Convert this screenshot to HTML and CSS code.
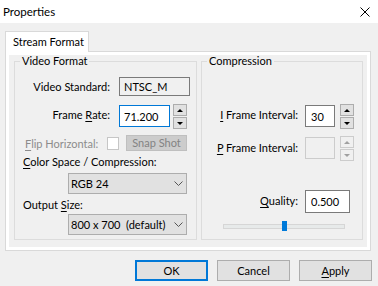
FILE: index.html
```html
<!DOCTYPE html>
<html lang="en">
<head>
    <meta charset="UTF-8">
    <title>Properties</title>
    <link rel="stylesheet" href="styles.css">
</head>
<body>

<div class="titlebar">
    <span>Properties</span>
    <svg class="close" width="10" height="10" viewBox="0 0 10 10">
        <path d="M0.5 0.5 L9.5 9.5 M9.5 0.5 L0.5 9.5" stroke="#000" stroke-width="1" fill="none"/>
    </svg>
</div>

<div class="tabs">
    <div class="tab">Stream Format</div>
</div>

<div class="panel">
    <div class="page">

        <!-- Video Format -->
        <fieldset class="group group-video">
            <legend>Video Format</legend>

            <div class="row row-std">
                <label class="lbl-right">Video Standard:</label>
                <input class="edit readonly w-std" type="text" value="NTSC_M" readonly>
            </div>

            <div class="row row-rate">
                <label class="lbl-right">Frame <u>R</u>ate:</label>
                <input class="edit focused w-rate" type="text" value="71.200">
                <div class="spin">
                    <div class="spin-btn"><span class="arrow-up"></span></div>
                    <div class="spin-btn"><span class="arrow-down"></span></div>
                </div>
            </div>

            <div class="row row-flip">
                <label class="lbl-flip"><u>F</u>lip Horizontal:</label>
                <span class="check"></span>
                <button class="btn-snap" disabled>Snap Shot</button>
            </div>

            <div class="caption"><u>C</u>olor Space / Compression:</div>
            <div class="row row-combo">
                <div class="combo"><span>RGB 24</span><svg class="chev" width="9" height="5" viewBox="0 0 9 5"><path d="M0.5 0.5 L4.5 4.5 L8.5 0.5" stroke="#555" fill="none"/></svg></div>
            </div>

            <div class="caption">Output <u>S</u>ize:</div>
            <div class="row row-combo2">
                <div class="combo"><span>800 x 700  (default)</span><svg class="chev" width="9" height="5" viewBox="0 0 9 5"><path d="M0.5 0.5 L4.5 4.5 L8.5 0.5" stroke="#555" fill="none"/></svg></div>
            </div>
        </fieldset>

        <!-- Compression -->
        <fieldset class="group group-comp">
            <legend>Compression</legend>

            <div class="row row-iframe">
                <label class="lbl-comp lbl-top"><u>I</u> Frame Interval:</label>
                <input class="edit w-int" type="text" value="30">
                <div class="spin spin-comp">
                    <div class="spin-btn"><span class="arrow-up"></span></div>
                    <div class="spin-btn"><span class="arrow-down"></span></div>
                </div>
            </div>

            <div class="row row-pframe">
                <label class="lbl-comp lbl-top"><u>P</u> Frame Interval:</label>
                <input class="edit disabled w-int" type="text" value="" disabled>
                <div class="spin spin-comp">
                    <div class="spin-btn off"><span class="arrow-up"></span></div>
                    <div class="spin-btn off"><span class="arrow-down"></span></div>
                </div>
            </div>

            <div class="row row-quality">
                <label class="lbl-comp"><u>Q</u>uality:</label>
                <input class="edit w-qual" type="text" value="0.500">
            </div>

            <div class="slider">
                <span class="thumb" style="left: 58px"></span>
            </div>
        </fieldset>

    </div>
</div>

<div class="buttons">
    <button class="btn default">OK</button>
    <button class="btn">Cancel</button>
    <button class="btn"><u>A</u>pply</button>
</div>

</body>
</html>
```

FILE: styles.css
```css
body {
    margin: 0;
    width: 378px;
    height: 286px;
    overflow: hidden;
    background-color: #f0f0f0;
    font-family: Lato, "Liberation Sans", sans-serif;
    font-size: 11px;
    color: #000;
}

u {
    text-decoration-thickness: 1px;
    text-underline-offset: 2px;
}

/* Titelleiste */
.titlebar {
    height: 23px;
    background-color: #fff;
    display: flex;
    align-items: center;
    justify-content: space-between;
    padding: 0 8px 0 3px;
    font-size: 11.5px;
}

.close {
    display: block;
}

/* Reiter */
.tabs {
    display: flex;
    padding: 8px 0 0 5px;
}

.tab {
    box-sizing: border-box;
    width: 84px;
    height: 21px;
    border: 1px solid #d9d9d9;
    border-bottom: none;
    background-color: #fff;
    padding-left: 7px;
    line-height: 20px;
    white-space: nowrap;
    margin-bottom: -1px;
    position: relative;
    z-index: 1;
}

.panel {
    box-sizing: border-box;
    height: 200px;
    margin: 0 7px 0 5px;
    border: 1px solid #d9d9d9;
    background-color: #fff;
    padding: 3px;
}

.page {
    box-sizing: border-box;
    height: 100%;
    background-color: #f0f0f0;
    display: flex;
    gap: 4px;
    padding: 0 4px 0 5px;
}

/* Gruppenrahmen */
.group {
    box-sizing: border-box;
    margin: 0;
    padding: 0;
    height: 185px;
    border: 1px solid #dcdcdc;
    min-width: 0;
}

.group-video {
    width: 183px;
}

.group-comp {
    width: 162px;
}

.group legend {
    margin-left: 5px;
    padding: 0 2px;
    line-height: 12px;
    white-space: nowrap;
}

.row {
    display: flex;
    align-items: flex-start;
}

/* Eingabefelder */
.edit {
    box-sizing: border-box;
    height: 22px;
    margin: 0;
    border: 1px solid #7a7a7a;
    background-color: #fff;
    padding: 0 0 0 4px;
    font: inherit;
    color: #000;
    outline: none;
}

.edit.readonly {
    background-color: #f0f0f0;
    height: 19px;
}

.edit.focused {
    border-color: #0078d7;
}

.edit.disabled {
    background-color: #f0f0f0;
    border-color: #cccccc;
}

.w-std { width: 71px; }
.w-rate { width: 51px; margin-top: 1px; }
.w-int { width: 30px; padding-left: 5px; margin-top: 1px; }
.w-qual { width: 45px; padding-left: 5px; height: 23px; }

.lbl-right {
    width: 95px;
    text-align: right;
    margin-right: 9px;
    align-self: center;
}

.row-std { margin-top: 10px; height: 19px; }
.row-rate { margin-top: 8px; height: 26px; }

.row-rate .lbl-right {
    align-self: flex-start;
    line-height: 15px;
    margin-top: 3px;
}

/* Drehfeld */
.spin {
    display: flex;
    flex-direction: column;
    gap: 1px;
    margin-left: 3px;
}

.spin-comp {
    margin-left: 5px;
}

.spin-btn {
    box-sizing: border-box;
    width: 14px;
    height: 12px;
    border: 1px solid #adadad;
    background-color: #e1e1e1;
    display: flex;
    align-items: center;
    justify-content: center;
}

.spin-btn.off {
    border-color: #cccccc;
    background-color: #f0f0f0;
}

.arrow-up, .arrow-down {
    width: 0;
    height: 0;
    border-left: 3px solid transparent;
    border-right: 3px solid transparent;
}

.arrow-up { border-bottom: 3px solid #000; }
.arrow-down { border-top: 3px solid #000; }

.off .arrow-up { border-bottom-color: #a0a0a0; }
.off .arrow-down { border-top-color: #a0a0a0; }

/* Spiegeln */
.row-flip {
    margin-top: 5px;
    height: 16px;
    align-items: center;
}

.lbl-flip {
    box-sizing: border-box;
    width: 92px;
    padding-left: 10px;
    color: #8c8c8c;
    white-space: nowrap;
}

.check {
    box-sizing: border-box;
    width: 12px;
    height: 13px;
    border: 1px solid #c6c6c6;
    background-color: #fff;
}

.btn-snap {
    box-sizing: border-box;
    width: 61px;
    height: 16px;
    margin-left: 7px;
    padding: 0;
    border: 1px solid #bfbfbf;
    background-color: #cccccc;
    color: #838383;
    font: inherit;
    line-height: 14px;
}

.caption {
    margin-top: 3px;
    height: 15px;
    line-height: 15px;
    padding-left: 8px;
}

.row-combo { margin-top: 4px; }
.row-combo2 { margin-top: 2px; }

/* Kombinationsfeld */
.combo {
    box-sizing: border-box;
    width: 119px;
    height: 21px;
    margin-left: 53px;
    border: 1px solid #adadad;
    background-color: #e1e1e1;
    padding-left: 2px;
    display: flex;
    align-items: center;
    justify-content: space-between;
    padding-right: 3px;
    white-space: pre;
}

.chev {
    display: block;
}

/* Kompression */
.lbl-comp {
    width: 96px;
    text-align: right;
    margin-right: 7px;
    align-self: center;
}

.lbl-comp.lbl-top {
    align-self: flex-start;
    line-height: 15px;
    margin-top: 3px;
}

.row-pframe .lbl-comp.lbl-top {
    margin-top: 4px;
}

.row-iframe { margin-top: 37px; height: 26px; }
.row-pframe { margin-top: 6px; height: 26px; }
.row-quality { margin-top: 28px; height: 23px; align-items: center; }
.row-quality .lbl-comp { margin-bottom: 2px; }

.slider {
    position: relative;
    box-sizing: border-box;
    width: 122px;
    height: 5px;
    margin: 11px 0 0 21px;
    border: 1px solid #d6d6d6;
    background-color: #e7eaea;
}

.thumb {
    position: absolute;
    top: -4px;
    width: 5px;
    height: 10px;
    background-color: #007ad9;
}

/* Schaltflächen unten */
.buttons {
    display: flex;
    justify-content: flex-end;
    gap: 9px;
    padding: 9px 6px 0 0;
}

.btn {
    box-sizing: border-box;
    width: 73px;
    height: 21px;
    margin: 0;
    padding: 0;
    border: 1px solid #adadad;
    background-color: #e1e1e1;
    font: inherit;
    color: #000;
}

.btn.default {
    border: 2px solid #0078d7;
}
```
